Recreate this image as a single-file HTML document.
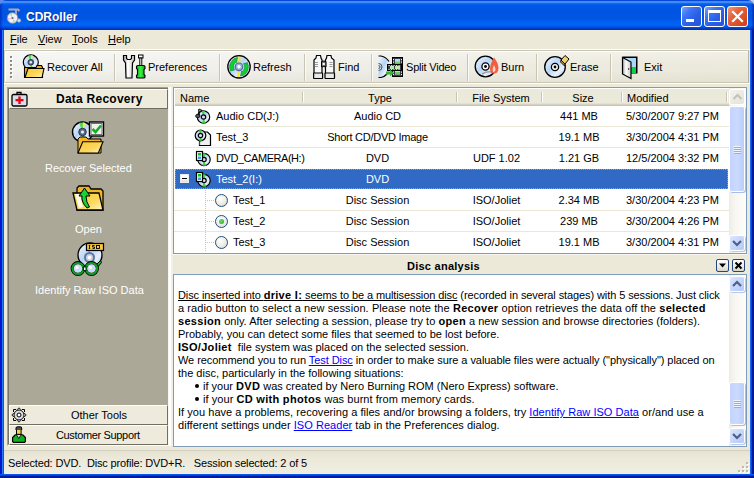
<!DOCTYPE html><html><head><meta charset="utf-8"><style>
*{margin:0;padding:0;box-sizing:border-box}
html,body{width:754px;height:478px;overflow:hidden;background:#6088EE}
body{font-family:"Liberation Sans",sans-serif;font-size:11px;color:#000;position:relative}
.a{position:absolute}
svg{position:absolute;overflow:visible}
#title{left:0;top:0;width:754px;height:30px;border-radius:6px 6px 0 0;background:linear-gradient(to bottom,#0A46D8 0px,#0A46D8 1px,#3D90F8 1px,#3A8CFA 3px,#1A6EF2 3px,#0C62EC 4px,#0058E6 5px,#0054E2 12px,#0055E3 19px,#005EEE 21px,#0064F6 25px,#005CF0 26px,#0050E0 27px,#0044D0 28px,#0036BC 29px,#0030B0 30px)}
#lb{left:0;top:30px;width:4px;height:448px;background:linear-gradient(to right,#0019CF 0,#0019CF 2px,#2B78F5 2px,#2B78F5 3px,#0A55E8 3px)}
#rb{left:750px;top:30px;width:4px;height:448px;background:linear-gradient(to right,#1A66F2 0,#1A66F2 1px,#0048D8 1px,#0048D8 2px,#001A9C 2px)}
#bb{left:0;top:474px;width:754px;height:4px;background:linear-gradient(to bottom,#0A5AF0 0,#0A5AF0 1px,#0040D0 1px,#0040D0 2px,#001A9C 2px)}
#client{left:4px;top:30px;width:746px;height:444px;background:#ECE9D8}
.tt{color:#fff;font-weight:bold;font-size:12px;left:26px;top:10px;text-shadow:1px 1px 0 #0A2A9A}
.tb{width:21px;height:21px;top:6px;border:1px solid #fff;border-radius:3px;
background:linear-gradient(135deg,#7AA5FC 0%,#3E74F4 30%,#2A5FE6 60%,#2553D8 100%)}
.mi{position:absolute;top:3px}
.u{text-decoration:underline}
#toolbar{left:4px;top:50px;width:745px;height:33px;background:linear-gradient(to bottom,rgba(255,255,255,.35) 0,rgba(255,255,255,0) 45%,rgba(130,120,90,0) 60%,rgba(130,120,90,.07) 100%),linear-gradient(to right,#F3F3F0 0,#EFEEE7 45%,#EBE9DA 100%);border-top:1px solid #C9C6B8;border-right:1px solid #B8B5A6;border-bottom:1px solid #C9C6B6}
.tbt{position:absolute;top:12px;white-space:nowrap}
.sep{position:absolute;width:2px;height:27px;border-left:1px solid #C8C5B3;border-right:1px solid rgba(255,255,255,.7)}
.lpt{color:#fff;white-space:nowrap;position:absolute}
.hdr{background:linear-gradient(#FFFFFF 0,#FFFFFF 1px,#EBE9DA 1px)}
.hdiv{width:2px;border-left:1px solid #C7C5B2;border-right:1px solid #fff}
.sbd{width:14px;height:14px;border-radius:2px;background:linear-gradient(135deg,#F4F3EE,#E4E2D8);box-shadow:0 0 0 1px #fff}
.sbb{width:14px;height:14px;border-radius:2px;background:linear-gradient(135deg,#DCE6FF 0%,#C6D6FC 50%,#B4C8F8 100%);box-shadow:0 0 0 1px #fff,1px 1px 0 1px #B8C8E8}
.thumb{width:14px;border-radius:2px;background:linear-gradient(to right,#C3D3FD 0,#CBD9FE 50%,#BACDFA 100%);box-shadow:0 0 0 1px #fff,1px 1px 0 1px #A8BCE8}
.track{width:17px;background:linear-gradient(to right,#EEEDE5 0,#F8F7F3 40%,#FDFDFA 100%)}
.txt{line-height:13px}
.txt div{white-space:pre}
.txt b{letter-spacing:0.3px}
.lk{color:#0000FF;text-decoration:underline}
.bul{display:inline-block;width:4px;height:4px;border-radius:50%;background:#000;margin-right:4px;vertical-align:2px}
.cell{position:absolute;white-space:nowrap}
</style></head><body>
<div class="a" style="left:744px;top:0;width:10px;height:10px;background:#C4CCE2"></div>
<div id="title" class="a"></div>
<div class="a" style="left:0;top:4px;width:3px;height:26px;background:linear-gradient(to right,rgba(0,20,170,.55),rgba(0,20,170,0))"></div>
<div class="a" style="left:751px;top:4px;width:3px;height:26px;background:linear-gradient(to left,rgba(0,20,140,.6),rgba(0,20,140,0))"></div>
<div class="a tt">CDRoller</div>
<div class="a tb" style="left:681px"></div>
<div class="a tb" style="left:704px"></div>
<div class="a tb" style="left:727px;background:linear-gradient(135deg,#F29A7E 0%,#E6643E 35%,#DD4E26 70%,#CC3F1A 100%)"></div>
<div class="a" style="left:686px;top:19px;width:8px;height:3px;background:#fff"></div>
<div class="a" style="left:708px;top:10px;width:13px;height:12px;border:1px solid #fff;border-top-width:3px"></div>
<svg style="left:727px;top:6px" width="21" height="21"><path d="M6 6 L15 15 M15 6 L6 15" stroke="#fff" stroke-width="2.2" stroke-linecap="square"/></svg>
<div id="lb" class="a"></div><div id="rb" class="a"></div><div id="bb" class="a"></div>
<div id="client" class="a"></div>
<svg style="left:6px;top:8px" width="17" height="16">
<path d="M2.5 1.5 L12 1.5 L13.5 3" stroke="#A8ACB8" stroke-width="2" fill="none"/>
<path d="M10 2 L10 9 L12.5 12" stroke="#B8BCC8" stroke-width="1.6" fill="none"/>
<circle cx="6.5" cy="10" r="5.3" fill="#EEF0F6" stroke="#8A90A0" stroke-width="1"/>
<path d="M6.5 10 L3.5 5.8 A5 5 0 0 1 5.5 5 Z" fill="#9CE89C"/>
<path d="M6.5 10 L9.5 14.2 A5 5 0 0 1 7.5 15 Z" fill="#9CE89C"/>
<path d="M6.5 10 L1.5 10.5 A5 5 0 0 0 2 12 Z" fill="#E8B0E8"/>
<circle cx="6.5" cy="10" r="1.1" fill="#606878"/>
<circle cx="13" cy="12.5" r="1.8" fill="#D8DCE6" stroke="#9098A8" stroke-width="0.8"/>
</svg>
<div class="mi" style="left:10px;top:33px"><span class="u">F</span>ile</div>
<div class="mi" style="left:38px;top:33px"><span class="u">V</span>iew</div>
<div class="mi" style="left:72px;top:33px"><span class="u">T</span>ools</div>
<div class="mi" style="left:108px;top:33px"><span class="u">H</span>elp</div>
<div class="a" style="left:4px;top:49px;width:746px;height:1px;background:#FFFFFF"></div>
<div id="toolbar" class="a"></div>
<div class="a" style="left:4px;top:51px;width:744px;height:1px;background:#FFFFFF"></div>
<div class="a" style="left:4px;top:83px;width:746px;height:1px;background:#fff"></div>
<div class="a" style="left:11px;top:57px;width:2px;height:2px;background:#fff"></div>
<div class="a" style="left:10px;top:56px;width:2px;height:2px;background:#8E8B7E"></div>
<div class="a" style="left:11px;top:61px;width:2px;height:2px;background:#fff"></div>
<div class="a" style="left:10px;top:60px;width:2px;height:2px;background:#8E8B7E"></div>
<div class="a" style="left:11px;top:65px;width:2px;height:2px;background:#fff"></div>
<div class="a" style="left:10px;top:64px;width:2px;height:2px;background:#8E8B7E"></div>
<div class="a" style="left:11px;top:69px;width:2px;height:2px;background:#fff"></div>
<div class="a" style="left:10px;top:68px;width:2px;height:2px;background:#8E8B7E"></div>
<div class="a" style="left:11px;top:73px;width:2px;height:2px;background:#fff"></div>
<div class="a" style="left:10px;top:72px;width:2px;height:2px;background:#8E8B7E"></div>
<div class="a" style="left:11px;top:77px;width:2px;height:2px;background:#fff"></div>
<div class="a" style="left:10px;top:76px;width:2px;height:2px;background:#8E8B7E"></div>
<div class="a" style="left:4px;top:50px;width:1px;height:33px;background:#D6D2C0"></div>
<div class="a" style="left:5px;top:51px;width:1px;height:31px;background:#fff"></div>
<div class="tbt" style="left:47px;top:61px;">Recover All</div>
<div class="tbt" style="left:148px;top:61px;">Preferences</div>
<div class="tbt" style="left:253px;top:61px;">Refresh</div>
<div class="tbt" style="left:338px;top:61px;">Find</div>
<div class="tbt" style="left:406px;top:61px;letter-spacing:-0.2px;">Split Video</div>
<div class="tbt" style="left:501px;top:61px;">Burn</div>
<div class="tbt" style="left:570px;top:61px;">Erase</div>
<div class="tbt" style="left:644px;top:61px;">Exit</div>
<div class="sep" style="left:114px;top:54px"></div>
<div class="sep" style="left:219px;top:54px"></div>
<div class="sep" style="left:304px;top:54px"></div>
<div class="sep" style="left:371px;top:54px"></div>
<div class="sep" style="left:467px;top:54px"></div>
<div class="sep" style="left:536px;top:54px"></div>
<div class="sep" style="left:610px;top:54px"></div>
<svg width="0" height="0" style="position:absolute"><defs>
<linearGradient id="gdisc" x1="0" y1="0" x2="1" y2="1"><stop offset="0" stop-color="#F4F8FF"/><stop offset=".45" stop-color="#B8D4F4"/><stop offset=".7" stop-color="#E8F0FC"/><stop offset="1" stop-color="#A8C4EC"/></linearGradient>
<linearGradient id="gfold" x1="0" y1="0" x2="1" y2="1"><stop offset="0" stop-color="#F8C830"/><stop offset=".6" stop-color="#FCD860"/><stop offset="1" stop-color="#FFF4C0"/></linearGradient>
<linearGradient id="gfoldb" x1="0" y1="0" x2="0" y2="1"><stop offset="0" stop-color="#F0B020"/><stop offset="1" stop-color="#F8C840"/></linearGradient>
<linearGradient id="gmetal" x1="0" y1="0" x2="1" y2="0"><stop offset="0" stop-color="#A0A0A0"/><stop offset=".4" stop-color="#FFFFFF"/><stop offset="1" stop-color="#C8C8C8"/></linearGradient>
<linearGradient id="ggreen" x1="0" y1="0" x2="1" y2="0"><stop offset="0" stop-color="#10B020"/><stop offset=".5" stop-color="#40F040"/><stop offset="1" stop-color="#10A020"/></linearGradient>
</defs></svg>
<svg style="left:21px;top:53px" width="26" height="26"><circle cx="9.8" cy="9.3" r="7.5" fill="url(#gdisc)" stroke="#000" stroke-width="1.2"/><path d="M9.8 9.3 L7.175000000000001 2.4000000000000004 L11.3 2.1750000000000007 Z" fill="#50D850"/><path d="M9.8 9.3 L10.175 2.1750000000000007 L12.05 2.5500000000000007 Z" fill="#F8F040"/><path d="M9.8 9.3 L12.425 16.200000000000003 L8.3 16.425 Z" fill="#50D850"/><path d="M9.8 9.3 L9.425 16.425 L7.550000000000001 16.05 Z" fill="#F8F040"/><circle cx="9.8" cy="9.3" r="2.85" fill="#5A6A88" stroke="#223" stroke-width="0.8"/><circle cx="9.8" cy="9.3" r="1.2" fill="#E8F0FF"/><path d="M3.5 24.5 L3.5 14.5 L15 14.5 L16 12.5 L20.5 12.5 L21.5 14.5 L21.5 24.5 Z" fill="#E8A818" stroke="#000" stroke-width="1.1"/><path d="M7 15.5 L23 15.5 L21 24.5 L4 24.5 Z" fill="url(#gfold)" stroke="#000" stroke-width="1.1"/></svg>
<svg style="left:122px;top:54px" width="26" height="26">
<path d="M1.5 1.5 L1.5 6 L3.5 9 L4 24 L10 24 L10.5 9 L12.5 6 L12.5 1.5 L9.5 1.5 L9.5 4.5 L8.5 5.5 L5.5 5.5 L4.5 4.5 L4.5 1.5 Z" fill="url(#gmetal)" stroke="#000" stroke-width="1.2"/>
<path d="M6 9 L6 22" stroke="#fff" stroke-width="1.5"/>
<rect x="16.5" y="1" width="4.5" height="3" fill="#fff" stroke="#000" stroke-width="1"/>
<rect x="17.8" y="4" width="2" height="7.5" fill="#fff" stroke="#000" stroke-width="1"/>
<path d="M14.5 12.5 Q14.5 11.5 16 11.5 L21.5 11.5 Q23 11.5 23 12.5 L23 14.5 L22 15.5 L22 20.5 L23 21.5 L23 23 Q23 24 21.5 24 L16 24 Q14.5 24 14.5 23 L14.5 21.5 L15.5 20.5 L15.5 15.5 L14.5 14.5 Z" fill="url(#ggreen)" stroke="#000" stroke-width="1.1"/>
</svg>
<svg style="left:227px;top:54px" width="26" height="26"><circle cx="12" cy="12.8" r="11.2" fill="url(#gdisc)"/><path d="M12.6 1.5 L11.4 24" stroke="#F4E430" stroke-width="2"/><path d="M3.5 17 A9.5 9.5 0 0 1 8 4.2 L10.5 3.5 L9.5 8.5 L9 8 A5.5 5.5 0 0 0 7.5 16 Z" fill="#10D030" stroke="#063" stroke-width="0.5"/><path d="M20.5 8.6 A9.5 9.5 0 0 1 16 21.4 L13.5 22 L14.5 17 L15 17.6 A5.5 5.5 0 0 0 16.5 9.6 Z" fill="#10D030" stroke="#063" stroke-width="0.5"/><circle cx="12" cy="12.8" r="11.2" fill="none" stroke="#000" stroke-width="1.3"/><circle cx="12" cy="12.8" r="3.8" fill="#9AB0D8" stroke="#4A6A9A" stroke-width="1.2"/><circle cx="12" cy="12.8" r="1.7" fill="#fff"/></svg>
<svg style="left:313px;top:54px" width="24" height="26">
<path d="M3.5 1.5 L7.5 1.5 L8 4 L9 6 L9 20 L1 20 L1 6 L3 4 Z" fill="#F8F8F8" stroke="#000" stroke-width="1.2"/>
<path d="M14 1.5 L18 1.5 L18.5 4 L21 6 L21 20 L12.5 20 L12.5 6 L13.5 4 Z" fill="#F8F8F8" stroke="#000" stroke-width="1.2"/>
<rect x="0.6" y="19" width="9" height="5.5" rx="0.5" fill="#E8E8E8" stroke="#000" stroke-width="1.2"/>
<rect x="12" y="19" width="9.5" height="5.5" rx="0.5" fill="#E8E8E8" stroke="#000" stroke-width="1.2"/>
<path d="M8.5 7.5 Q10.75 6.5 13 7.5 L13 13 Q10.75 12 8.5 13 Z" fill="#707070" stroke="#000" stroke-width="1"/>
<rect x="9.7" y="9" width="2.1" height="2" fill="#fff"/>
<path d="M2 8.5H5M2 10.5H5M2 12.5H5M16.5 8.5H19.5M16.5 10.5H19.5M16.5 12.5H19.5" stroke="#909090" stroke-width="0.9"/>
</svg>
<svg style="left:378px;top:55px" width="26" height="24">
<path d="M0.5 1 L3 1 A12 12 0 0 1 11 6.5 L11 18 A12 12 0 0 1 3 22.5 L0.5 22.5 Z" fill="url(#gdisc)"/>
<path d="M0.5 1 L3 1 A12 12 0 0 1 11 6.5 M9 19 A12 12 0 0 1 3 22.5 L0.5 22.5" fill="none" stroke="#000" stroke-width="1.2"/>
<path d="M0.5 8.5 A3.5 3.5 0 0 1 0.5 15.5 M0.5 10.5 A1.5 1.5 0 0 1 0.5 13.5" fill="none" stroke="#555" stroke-width="1"/>
<rect x="14.5" y="2.5" width="10" height="19" fill="#3A3A48" stroke="#000" stroke-width="1"/>
<path d="M15.5 4V20M23.5 4V20" stroke="#fff" stroke-width="1" stroke-dasharray="1.2 1.3"/>
<rect x="17" y="4" width="5" height="4.5" fill="#A8E0F8"/><rect x="17" y="6.5" width="5" height="2" fill="#80D070"/>
<rect x="17" y="14.5" width="5" height="5" fill="#A8E0F8"/><rect x="17" y="17" width="5" height="2.5" fill="#70C860"/>
<rect x="9.5" y="9.5" width="14" height="6" fill="#3A3A48" stroke="#000" stroke-width="1"/>
<path d="M10.5 10.5H23M10.5 14.5H23" stroke="#fff" stroke-width="0.8" stroke-dasharray="1.2 1.3"/>
<rect x="12" y="11" width="4" height="3" fill="#B0E8C0"/><rect x="17" y="11" width="5" height="3" fill="#C0ECA0"/>
<path d="M8 16.5 L12 16.5 L12 14.5 L16 18 L12 21.5 L12 19.5 L8 19.5 Z" fill="#40B040"/>
</svg>
<svg style="left:475px;top:55px" width="26" height="24"><circle cx="10.5" cy="11.5" r="10.3" fill="url(#gdisc)" stroke="#000" stroke-width="1.3"/><circle cx="10.5" cy="11.5" r="3.6" fill="#fff" stroke="#000" stroke-width="1.3"/><circle cx="10.5" cy="11.5" r="1.4" fill="#000"/><path d="M7 19 Q12 16 17 17" stroke="#A0A0A8" stroke-width="1.5" fill="none"/><path d="M19 2.5 Q15 9 15 14 Q15 18.5 19 18.5 Q23.5 18.5 23.5 13 Q23.5 8 19 2.5 Z" fill="#F06040"/><path d="M19 10 Q17 14 18 17 Q20.5 17 20.5 14 Z" fill="#FFD8C8"/></svg>
<svg style="left:544px;top:55px" width="26" height="24"><circle cx="11" cy="12" r="10.3" fill="url(#gdisc)" stroke="#000" stroke-width="1.3"/><circle cx="11" cy="12" r="3.6" fill="#fff" stroke="#000" stroke-width="1.3"/><circle cx="11" cy="12" r="1.4" fill="#000"/><path d="M17 5 L21 0.5 L25 4 L21 9 Z" fill="#F0D070" stroke="#000" stroke-width="1"/><path d="M17 5 L21 9 L20.5 11 L16.5 7 Z" fill="#B89040" stroke="#000" stroke-width="0.8"/></svg>
<svg style="left:621px;top:55px" width="20" height="25">
<rect x="1.5" y="1.5" width="15" height="17" fill="#000"/>
<rect x="3" y="3" width="12" height="9" fill="#A8D8F8"/><rect x="3" y="12" width="12" height="6" fill="#10D040"/>
<path d="M1.5 2.5 L10 7 L10 23.5 L1.5 19 Z" fill="url(#gmetal)" stroke="#000" stroke-width="1.2"/>
<rect x="7" y="13" width="1.2" height="2" fill="#555"/>
</svg>
<div class="a" style="left:7px;top:87px;width:162px;height:359px;background:#ABA897;border-top:1px solid #A5A293;border-left:1px solid #A5A293;border-right:1px solid #fff;border-bottom:1px solid #fff"></div>
<div class="a" style="left:8px;top:88px;width:1px;height:356px;background:#75736A"></div>
<div class="a" style="left:8px;top:88px;width:160px;height:1px;background:#75736A"></div>
<div class="a" style="left:9px;top:89px;width:159px;height:20px;background:#EEEBDD;border-top:1px solid #fff;border-left:1px solid #fff;border-bottom:1px solid #716F64;border-right:1px solid #716F64"></div>
<div class="a" style="left:56px;top:92px;font-weight:bold;font-size:12px;white-space:nowrap;letter-spacing:0.25px">Data Recovery</div>
<svg style="left:11px;top:91px" width="17" height="17">
<path d="M6 3.5 L6 1.5 L10 1.5 L10 3.5" fill="none" stroke="#000" stroke-width="1.3"/>
<rect x="1" y="3.5" width="15" height="11.5" rx="1.5" fill="#D8DEE8" stroke="#000" stroke-width="1.3"/>
<path d="M7.3 5.5 L9.7 5.5 L9.7 8 L12.5 8 L12.5 10.3 L9.7 10.3 L9.7 13 L7.3 13 L7.3 10.3 L4.5 10.3 L4.5 8 L7.3 8 Z" fill="#F00010"/>
</svg>
<svg style="left:72px;top:121px" width="33" height="33"><circle cx="10.5" cy="11" r="10" fill="url(#gdisc)" stroke="#000" stroke-width="1.4"/><path d="M10.5 11 L7.0 1.799999999999999 L12.5 1.5 Z" fill="#50D850"/><path d="M10.5 11 L11.0 1.5 L13.5 2.0 Z" fill="#F8F040"/><path d="M10.5 11 L14.0 20.200000000000003 L8.5 20.5 Z" fill="#50D850"/><path d="M10.5 11 L10.0 20.5 L7.5 20.0 Z" fill="#F8F040"/><circle cx="10.5" cy="11" r="3.8" fill="#5A6A88" stroke="#223" stroke-width="0.8"/><circle cx="10.5" cy="11" r="1.6" fill="#E8F0FF"/><rect x="17.5" y="1" width="14" height="14" fill="#fff" stroke="#000" stroke-width="1.4"/><rect x="19" y="2.5" width="11" height="11" fill="#F0F0F0" stroke="#707070" stroke-width="1"/><path d="M20.5 8 L23.5 11 L29 4.5" fill="none" stroke="#10B020" stroke-width="2.6"/><path d="M6 32 L6 18 L8 16 L14.1 16 L15.92 18 L29 18 L29 32 Z" fill="url(#gfoldb)" stroke="#000" stroke-width="1"/><path d="M10.719999999999999 20.8 L31 20.8 L26.32 32 L6 32 Z" fill="url(#gfold)" stroke="#000" stroke-width="1.1"/></svg>
<div class="lpt" style="left:45px;top:162px">Recover Selected</div>
<svg style="left:72px;top:185px" width="33" height="27">
<path d="M5 25 L5 3 L7 1 L17 1 L19 4 L29 4 L31 6 L31 25 Z" fill="url(#gfoldb)" stroke="#000" stroke-width="1.3"/>
<path d="M1 8 L27 8 L31 25 L5 25 Z" fill="url(#gfold)" stroke="#000" stroke-width="1.3"/>
<path d="M3 9 L8 9 L11 22 L7 23 Z" fill="#FFFBEA"/>
<path d="M15 23 Q9 17 10 11 L7 11 L12.5 3 L18 11 L14 11 Q14 17 17.5 22 Z" fill="#18D038" stroke="#000" stroke-width="1"/>
</svg>
<div class="lpt" style="left:75px;top:223px">Open</div>
<svg style="left:72px;top:242px" width="33" height="34"><circle cx="18" cy="13" r="12" fill="url(#gdisc)" stroke="#000" stroke-width="1.3"/><path d="M18 13 L13 2.2 L17 1.2 Z" fill="#40D840"/><circle cx="17.5" cy="15.5" r="4.5" fill="#C8D4E8" stroke="#6078A0" stroke-width="2"/><circle cx="17.5" cy="15.5" r="1.8" fill="#fff"/><rect x="14.5" y="1.5" width="17" height="7" fill="#F8C840" stroke="#000" stroke-width="1.2"/><path d="M17.5 3.5V6.5M16.8 3.5H18.2M16.8 6.5H18.2" stroke="#000" stroke-width="0.9"/><path d="M22.5 3.5 H20.5 V5 H22.5 V6.5 H20.5" fill="none" stroke="#000" stroke-width="0.9"/><rect x="24.5" y="3.5" width="3" height="3" fill="none" stroke="#000" stroke-width="0.9"/><path d="M23 24 L28.5 18.5 L29.5 20.5 L25 26" fill="#20B030" stroke="#000" stroke-width="1"/><circle cx="6" cy="26.5" r="5.6" fill="#C0D8F8" stroke="#000" stroke-width="3.6"/><circle cx="19.5" cy="26.5" r="5.6" fill="#C0D8F8" stroke="#000" stroke-width="3.6"/><circle cx="6" cy="26.5" r="5.6" fill="none" stroke="#10A020" stroke-width="2"/><circle cx="19.5" cy="26.5" r="5.6" fill="none" stroke="#10A020" stroke-width="2"/><circle cx="6" cy="26.5" r="4.3" fill="#C8DCF8"/><circle cx="19.5" cy="26.5" r="4.3" fill="#C8DCF8"/><circle cx="5" cy="25.5" r="1.5" fill="#fff"/><circle cx="18.5" cy="25.5" r="1.5" fill="#fff"/><rect x="11.5" y="25" width="2.5" height="3.5" fill="#fff" stroke="#000" stroke-width="0.8"/></svg>
<div class="lpt" style="left:35px;top:284px">Identify Raw ISO Data</div>
<div class="a" style="left:9px;top:405px;width:159px;height:20px;background:#EEEBDD;border-top:1px solid #fff;border-left:1px solid #fff;border-bottom:1px solid #716F64;border-right:1px solid #716F64"></div>
<div class="a" style="left:9px;top:425px;width:159px;height:20px;background:#EEEBDD;border-top:1px solid #fff;border-left:1px solid #fff;border-bottom:1px solid #716F64;border-right:1px solid #716F64"></div>
<div class="a" style="left:71px;top:409px;white-space:nowrap">Other Tools</div>
<div class="a" style="left:56px;top:429px;white-space:nowrap;letter-spacing:-0.35px">Customer Support</div>
<svg style="left:11px;top:407px" width="16" height="16">
<g fill="#F4F4F4" stroke="#000" stroke-width="0.9">
<path d="M6 2.8 L8 0.8 L10 2.8"/><path d="M6 13.2 L8 15.2 L10 13.2"/>
<path d="M2.8 6 L0.8 8 L2.8 10"/><path d="M13.2 6 L15.2 8 L13.2 10"/>
</g>
<g fill="none" stroke="#000" stroke-width="1">
<path d="M2.5 5 L2.5 2.5 L5 2.5"/><path d="M13.5 5 L13.5 2.5 L11 2.5"/>
<path d="M2.5 11 L2.5 13.5 L5 13.5"/><path d="M13.5 11 L13.5 13.5 L11 13.5"/>
</g>
<circle cx="8" cy="8" r="5" fill="#DCDCDC" stroke="#000" stroke-width="1"/>
<circle cx="8" cy="8" r="2" fill="#fff" stroke="#000" stroke-width="1"/>
</svg>
<svg style="left:12px;top:426px" width="15" height="17">
<path d="M0.6 15.5 L0.6 11.5 L3 9 L5 8.5 L9 8.5 L11 9 L13.4 11.5 L13.4 15.5 L12.5 16.4 L1.5 16.4 Z" fill="#10B020" stroke="#000" stroke-width="1.2"/>
<path d="M4.3 8.5 L6.8 12.5 L9.3 8.5 Z" fill="#D8D8D8" stroke="#000" stroke-width="0.8"/>
<rect x="4.5" y="3" width="4.6" height="5.3" fill="#F8D040" stroke="#000" stroke-width="1"/>
<path d="M4 4 L4 2 Q4 0.8 5.5 0.8 L8.3 0.8 Q9.7 0.8 9.7 2 L9.7 4" fill="#505050" stroke="#000" stroke-width="1"/>
</svg>
<div class="a" style="left:168px;top:87px;width:1px;height:359px;background:#F8F7F2"></div>
<div class="a" style="left:169px;top:87px;width:2px;height:359px;background:#FFFFFF"></div>
<div class="a" style="left:171px;top:87px;width:2px;height:359px;background:#F2F0E6"></div>
<div class="a" style="left:173px;top:87px;width:574px;height:167px;border:1px solid #7F9DB9;background:#fff"></div>
<div class="a hdr" style="left:175px;top:88px;width:554px;height:18px"></div>
<div class="a" style="left:175px;top:103px;width:554px;height:1px;background:#E4E1D2"></div>
<div class="a" style="left:175px;top:104px;width:554px;height:1px;background:#D6D2C2"></div>
<div class="a" style="left:175px;top:105px;width:554px;height:1px;background:#C8C4B2"></div>
<div class="cell" style="left:180px;top:92px">Name</div>
<div class="cell" style="left:303px;width:154px;top:92px;text-align:center">Type</div>
<div class="cell" style="left:459px;width:84px;top:92px;text-align:center">File System</div>
<div class="cell" style="left:543px;width:80px;top:92px;text-align:center">Size</div>
<div class="cell" style="left:627px;top:92px">Modified</div>
<div class="a hdiv" style="left:302px;top:92px;height:10px"></div>
<div class="a hdiv" style="left:456px;top:92px;height:10px"></div>
<div class="a hdiv" style="left:541px;top:92px;height:10px"></div>
<div class="a hdiv" style="left:621px;top:92px;height:10px"></div>
<div class="a hdiv" style="left:726px;top:92px;height:10px"></div>
<div class="a" style="left:174px;top:126px;width:555px;height:1px;background:#EAE7D7"></div>
<div class="cell" style="left:216px;top:110px;color:#000;">Audio CD(J:)</div>
<div class="cell" style="left:303px;width:149px;top:110px;text-align:center;color:#000;">Audio CD</div>
<div class="cell" style="left:541px;width:76px;top:110px;text-align:center">441 MB</div>
<div class="cell" style="left:626px;top:110px">5/30/2007 9:27 PM</div>
<div class="a" style="left:174px;top:147px;width:555px;height:1px;background:#EAE7D7"></div>
<div class="cell" style="left:216px;top:131px;color:#000;">Test_3</div>
<div class="cell" style="left:303px;width:149px;top:131px;text-align:center;color:#000;letter-spacing:-0.25px;">Short CD/DVD Image</div>
<div class="cell" style="left:541px;width:76px;top:131px;text-align:center">19.1 MB</div>
<div class="cell" style="left:626px;top:131px">3/30/2004 4:31 PM</div>
<div class="cell" style="left:216px;top:152px;color:#000;letter-spacing:-0.45px;">DVD_CAMERA(H:)</div>
<div class="cell" style="left:303px;width:149px;top:152px;text-align:center;color:#000;">DVD</div>
<div class="cell" style="left:457px;width:79px;top:152px;text-align:center">UDF 1.02</div>
<div class="cell" style="left:541px;width:76px;top:152px;text-align:center">1.21 GB</div>
<div class="cell" style="left:626px;top:152px">12/5/2004 3:32 PM</div>
<div class="a" style="left:175px;top:169px;width:553px;height:20px;background:#316AC5"></div>
<div class="a" style="left:175px;top:169px;width:553px;height:20px;border:1px dotted #CE953A"></div>
<div class="cell" style="left:216px;top:173px;color:#fff;">Test_2(I:)</div>
<div class="cell" style="left:303px;width:149px;top:173px;text-align:center;color:#fff;">DVD</div>
<div class="a" style="left:174px;top:210px;width:555px;height:1px;background:#EAE7D7"></div>
<div class="cell" style="left:233px;top:194px;color:#000;">Test_1</div>
<div class="cell" style="left:303px;width:149px;top:194px;text-align:center;color:#000;">Disc Session</div>
<div class="cell" style="left:457px;width:79px;top:194px;text-align:center">ISO/Joliet</div>
<div class="cell" style="left:541px;width:76px;top:194px;text-align:center">2.34 MB</div>
<div class="cell" style="left:626px;top:194px">3/30/2004 4:23 PM</div>
<div class="a" style="left:174px;top:231px;width:555px;height:1px;background:#EAE7D7"></div>
<div class="cell" style="left:233px;top:215px;color:#000;">Test_2</div>
<div class="cell" style="left:303px;width:149px;top:215px;text-align:center;color:#000;">Disc Session</div>
<div class="cell" style="left:457px;width:79px;top:215px;text-align:center">ISO/Joliet</div>
<div class="cell" style="left:541px;width:76px;top:215px;text-align:center">239 MB</div>
<div class="cell" style="left:626px;top:215px">3/30/2004 4:26 PM</div>
<div class="cell" style="left:233px;top:236px;color:#000;">Test_3</div>
<div class="cell" style="left:303px;width:149px;top:236px;text-align:center;color:#000;">Disc Session</div>
<div class="cell" style="left:457px;width:79px;top:236px;text-align:center">ISO/Joliet</div>
<div class="cell" style="left:541px;width:76px;top:236px;text-align:center">19.1 MB</div>
<div class="cell" style="left:626px;top:236px">3/30/2004 4:31 PM</div>
<div class="a" style="left:180px;top:174px;width:9px;height:9px;border:1px solid #E8ECF4;background:linear-gradient(to bottom,#FFFFFF 0,#FFFFFF 40%,#E4DFCC 100%)"></div>
<div class="a" style="left:182px;top:178px;width:5px;height:1px;background:#000"></div>
<div class="a" style="left:205px;top:190px;width:1px;height:62px;background:repeating-linear-gradient(to bottom,#C8C4B0 0,#C8C4B0 1px,transparent 1px,transparent 2px)"></div>
<div class="a" style="left:206px;top:200px;width:9px;height:1px;background:repeating-linear-gradient(to right,transparent 0,transparent 1px,#C8C4B0 1px,#C8C4B0 2px)"></div>
<div class="a" style="left:215px;top:194px;width:13px;height:13px;border-radius:50%;border:1px solid #1C5180;background:radial-gradient(circle at 40% 35%,#FFFFFF 0,#F0F0EA 45%,#D6D4CA 100%)"></div>
<div class="a" style="left:206px;top:221px;width:9px;height:1px;background:repeating-linear-gradient(to right,transparent 0,transparent 1px,#C8C4B0 1px,#C8C4B0 2px)"></div>
<div class="a" style="left:215px;top:215px;width:13px;height:13px;border-radius:50%;border:1px solid #1C5180;background:radial-gradient(circle at 40% 35%,#FFFFFF 0,#F0F0EA 45%,#D6D4CA 100%)"></div>
<div class="a" style="left:206px;top:242px;width:9px;height:1px;background:repeating-linear-gradient(to right,transparent 0,transparent 1px,#C8C4B0 1px,#C8C4B0 2px)"></div>
<div class="a" style="left:215px;top:236px;width:13px;height:13px;border-radius:50%;border:1px solid #1C5180;background:radial-gradient(circle at 40% 35%,#FFFFFF 0,#F0F0EA 45%,#D6D4CA 100%)"></div>
<div class="a" style="left:219px;top:219px;width:5px;height:5px;border-radius:50%;background:radial-gradient(circle at 40% 40%,#6CE06C,#21A121)"></div>
<svg style="left:195px;top:108px" width="16" height="17"><circle cx="8.5" cy="9" r="6.2" fill="url(#gdisc)" stroke="#000" stroke-width="1.2"/><path d="M8.5 9 L6.5 2.8 L10.0 2.8 Z" fill="#40D040"/><path d="M8.5 9 L10.5 15.2 L7.0 15.2 Z" fill="#40D040"/><circle cx="8.5" cy="9" r="2.2" fill="#DDE" stroke="#000" stroke-width="1.2"/><path d="M4 1 L4 8" stroke="#000" stroke-width="1.5"/><path d="M4 1 L7.5 2.5 L4 4" fill="#888" stroke="#000" stroke-width="0.8"/><ellipse cx="2.8" cy="8" rx="2.2" ry="1.7" fill="#555" stroke="#000" stroke-width="0.8"/></svg>
<svg style="left:195px;top:129px" width="17" height="18"><path d="M4.5 8 L4.5 16.5 L15.5 16.5 L15.5 6 L12.5 3 L9 3" fill="#F0F0F0" stroke="#000" stroke-width="1.2"/><path d="M4.5 10 L4.5 16" stroke="#802080" stroke-width="1"/><circle cx="5.5" cy="6.5" r="5.3" fill="url(#gdisc)" stroke="#000" stroke-width="1.2"/><path d="M5.5 6.5 L3.5 1.2000000000000002 L7.0 1.2000000000000002 Z" fill="#40D040"/><path d="M5.5 6.5 L7.5 11.8 L4.0 11.8 Z" fill="#40D040"/><circle cx="5.5" cy="6.5" r="2.2" fill="#DDE" stroke="#000" stroke-width="1.2"/></svg>
<svg style="left:195px;top:150px" width="16" height="17"><circle cx="9" cy="9.5" r="6.2" fill="url(#gdisc)" stroke="#000" stroke-width="1.2"/><path d="M9 9.5 L7 3.3 L10.5 3.3 Z" fill="#40D040"/><path d="M9 9.5 L11 15.7 L7.5 15.7 Z" fill="#40D040"/><circle cx="9" cy="9.5" r="2.2" fill="#DDE" stroke="#000" stroke-width="1.2"/><rect x="1.5" y="1.5" width="6" height="9" fill="#fff" stroke="#000" stroke-width="1.2"/><rect x="3" y="3" width="3" height="2.5" fill="#10C030"/><rect x="3" y="6.5" width="3" height="2.5" fill="#40A0E0"/></svg>
<svg style="left:195px;top:171px" width="16" height="17"><circle cx="9" cy="9.5" r="6.2" fill="url(#gdisc)" stroke="#000" stroke-width="1.2"/><path d="M9 9.5 L7 3.3 L10.5 3.3 Z" fill="#40D040"/><path d="M9 9.5 L11 15.7 L7.5 15.7 Z" fill="#40D040"/><circle cx="9" cy="9.5" r="2.2" fill="#DDE" stroke="#000" stroke-width="1.2"/><rect x="1.5" y="1.5" width="6" height="9" fill="#fff" stroke="#000" stroke-width="1.2"/><rect x="3" y="3" width="3" height="2.5" fill="#10C030"/><rect x="3" y="6.5" width="3" height="2.5" fill="#40A0E0"/></svg>
<div class="a track" style="left:729px;top:88px;height:165px"></div>
<div class="a sbd" style="left:730px;top:90px"></div>
<svg style="left:730px;top:90px" width="15" height="15"><path d="M3.5 9 L7.5 5 L11.5 9" fill="none" stroke="#C4C2B6" stroke-width="2"/></svg>
<div class="a thumb" style="left:730px;top:107px;height:84px"></div>
<svg style="left:733px;top:146px" width="8" height="8"><path d="M0.5 .5H7.5M0.5 2.5H7.5M0.5 4.5H7.5M0.5 6.5H7.5" stroke="#EEF4FE" stroke-width="1"/><path d="M1 1.5H8M1 3.5H8M1 5.5H8M1 7.5H8" stroke="#8CB0F8" stroke-width="1"/></svg>
<div class="a sbb" style="left:730px;top:236px"></div>
<svg style="left:730px;top:236px" width="15" height="15"><path d="M3 5 L7 9 L11 5" fill="none" stroke="#4D6185" stroke-width="2.2"/></svg>
<div class="a" style="left:173px;top:254px;width:574px;height:1px;background:#F8F7F2"></div>
<div class="cell" style="left:407px;top:260px;font-weight:bold;letter-spacing:0.25px">Disc analysis</div>
<div class="a" style="left:716px;top:259px;width:13px;height:13px;border:1px solid #24477E;border-radius:2px;background:linear-gradient(to bottom,#FFFFFF,#ECEBE4 60%,#D8D6CA)"></div>
<div class="a" style="left:732px;top:259px;width:13px;height:13px;border:1px solid #24477E;border-radius:2px;background:linear-gradient(to bottom,#FFFFFF,#ECEBE4 60%,#D8D6CA)"></div>
<svg style="left:716px;top:259px" width="13" height="13"><path d="M3 4.5 L10 4.5 L6.5 8.5 Z" fill="#000"/></svg>
<svg style="left:732px;top:259px" width="13" height="13"><path d="M3.5 3.5 L9.5 9.5 M9.5 3.5 L3.5 9.5" stroke="#000" stroke-width="2"/></svg>
<div class="a" style="left:173px;top:274px;width:574px;height:173px;border:1px solid #7F9DB9;background:#fff"></div>
<div class="a txt" style="left:178px;top:289px">
<div style="letter-spacing:-0.095px"><span class="u">Disc inserted into <b>drive I:</b> seems to be a multisession disc</span> (recorded in several stages) with 5 sessions. Just click</div>
<div style="letter-spacing:0.093px">a radio button to select a new session. Please note the <b>Recover</b> option retrieves the data off the <b>selected</b></div>
<div style="letter-spacing:0.023px"><b>session</b> only. After selecting a session, please try to <b>open</b> a new session and browse directories (folders).</div>
<div>Probably, you can detect some files that seemed to be lost before.</div>
<div><b>ISO/Joliet</b>  file system was placed on the selected session.</div>
<div style="letter-spacing:-0.064px">We recommend you to run <span class="lk">Test Disc</span> in order to make sure a valuable files were actually ("physically") placed on</div>
<div>the disc, particularly in the following situations:</div>
<div style="padding-left:17px"><span class="bul"></span>if your <b>DVD</b> was created by Nero Burning ROM (Nero Express) software.</div>
<div style="letter-spacing:0.056px;padding-left:17px"><span class="bul"></span>if your <b>CD with photos</b> was burnt from memory cards.</div>
<div style="letter-spacing:0.038px">If you have a problems, recovering a files and/or browsing a folders, try <span class="lk">Identify Raw ISO Data</span> or/and use a</div>
<div style="letter-spacing:0.04px">different settings under <span class="lk">ISO Reader</span> tab in the Preferences dialog.</div>
</div>
<div class="a track" style="left:729px;top:275px;height:171px"></div>
<div class="a sbb" style="left:730px;top:277px"></div>
<svg style="left:730px;top:277px" width="15" height="15"><path d="M3 9 L7 5 L11 9" fill="none" stroke="#4D6185" stroke-width="2.2"/></svg>
<div class="a thumb" style="left:730px;top:383px;height:41px"></div>
<svg style="left:733px;top:400px" width="8" height="8"><path d="M0.5 .5H7.5M0.5 2.5H7.5M0.5 4.5H7.5M0.5 6.5H7.5" stroke="#EEF4FE" stroke-width="1"/><path d="M1 1.5H8M1 3.5H8M1 5.5H8M1 7.5H8" stroke="#8CB0F8" stroke-width="1"/></svg>
<div class="a sbb" style="left:730px;top:429px"></div>
<svg style="left:730px;top:429px" width="15" height="15"><path d="M3 5 L7 9 L11 5" fill="none" stroke="#4D6185" stroke-width="2.2"/></svg>
<div class="a" style="left:4px;top:450px;width:746px;height:1px;background:#D2CFC0"></div>
<div class="a" style="left:4px;top:451px;width:746px;height:23px;background:linear-gradient(to bottom,#E6E3D3 0,#ECE9DA 30%,#F0EEE2 100%)"></div>
<div class="cell" style="left:8px;top:457px;white-space:pre;letter-spacing:-0.15px">Selected: DVD.  Disc profile: DVD+R.   Session selected: 2 of 5</div>
<div class="a" style="left:747px;top:463px;width:2px;height:2px;background:#fff"></div><div class="a" style="left:746px;top:462px;width:2px;height:2px;background:#BDBAA8"></div>
<div class="a" style="left:743px;top:467px;width:2px;height:2px;background:#fff"></div><div class="a" style="left:742px;top:466px;width:2px;height:2px;background:#BDBAA8"></div>
<div class="a" style="left:747px;top:467px;width:2px;height:2px;background:#fff"></div><div class="a" style="left:746px;top:466px;width:2px;height:2px;background:#BDBAA8"></div>
<div class="a" style="left:739px;top:471px;width:2px;height:2px;background:#fff"></div><div class="a" style="left:738px;top:470px;width:2px;height:2px;background:#BDBAA8"></div>
<div class="a" style="left:743px;top:471px;width:2px;height:2px;background:#fff"></div><div class="a" style="left:742px;top:470px;width:2px;height:2px;background:#BDBAA8"></div>
<div class="a" style="left:747px;top:471px;width:2px;height:2px;background:#fff"></div><div class="a" style="left:746px;top:470px;width:2px;height:2px;background:#BDBAA8"></div>
</body></html>
